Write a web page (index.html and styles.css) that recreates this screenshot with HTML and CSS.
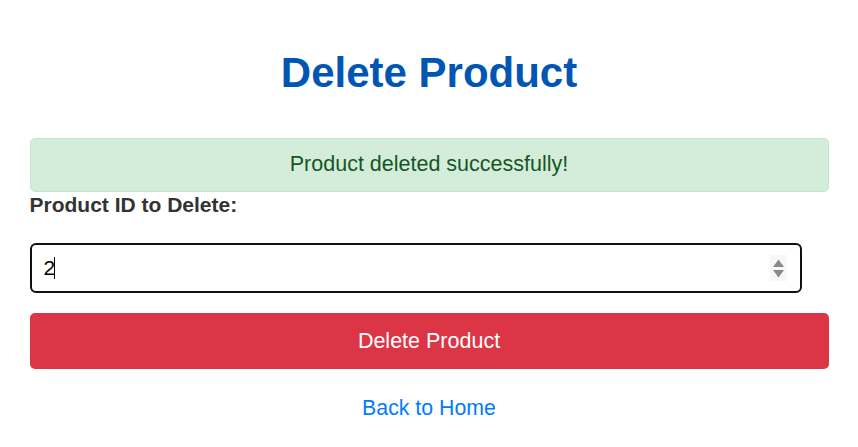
FILE: index.html
```html
<!DOCTYPE html>
<html>
<head>
<meta charset="utf-8">
<link rel="stylesheet" href="styles.css">
</head>
<body>
<div class="container">
  <h1 class="title">Delete Product</h1>
  <div class="alert">Product deleted successfully!</div>
  <form class="form">
    <label class="label" for="pid">Product ID to Delete:</label>
    <div class="field">
      <input class="input" id="pid" type="number" value="2">
      <span class="caret"></span>
      <span class="spin">
        <svg width="17" height="26" viewBox="0 0 17 26"><path d="M8.5 4.5 L14 12 L3 12 Z" fill="#8a8a8a"/><path d="M3 15 L14 15 L8.5 22.5 Z" fill="#8a8a8a"/></svg>
      </span>
    </div>
    <button class="btn" type="button">Delete Product</button>
  </form>
  <a class="back" href="#">Back to Home</a>
</div>
</body>
</html>
```

FILE: styles.css
```css
html, body {
  margin: 0;
  padding: 0;
  background: #ffffff;
}
body {
  font-family: "Liberation Sans", Arial, sans-serif;
  color: #333333;
}
.container {
  width: 799px;
  margin: 0 auto;
  padding-top: 48px;
  display: flex;
  flex-direction: column;
}
.title {
  margin: 0 0 40px;
  font-size: 42px;
  line-height: 50px;
  font-weight: bold;
  text-align: center;
  color: #0056b3;
}
.alert {
  background: #d4edda;
  border: 1px solid #c3e6cb;
  color: #155724;
  border-radius: 5px;
  font-size: 21.5px;
  line-height: 25px;
  padding: 13px 10px 14px;
  text-align: center;
}
.form {
  display: flex;
  flex-direction: column;
  margin: 0;
}
.label {
  font-size: 21px;
  font-weight: bold;
  line-height: 25px;
  margin-top: 0;
  color: #333333;
}
.field {
  position: relative;
  margin-top: 26px;
  width: 772px;
}
.input {
  box-sizing: border-box;
  width: 772px;
  height: 50px;
  border: 2px solid #111111;
  border-radius: 6px;
  padding: 0 12px;
  font-family: "Liberation Sans", Arial, sans-serif;
  font-size: 21px;
  color: #000;
  outline: none;
  -moz-appearance: textfield;
  appearance: textfield;
  display: block;
}
.input::-webkit-inner-spin-button,
.input::-webkit-outer-spin-button {
  -webkit-appearance: none;
  margin: 0;
}
.caret {
  position: absolute;
  left: 24px;
  top: 14px;
  width: 1px;
  height: 22px;
  background: #000;
}
.spin {
  position: absolute;
  right: 15px;
  top: 12px;
  width: 17px;
  height: 26px;
  display: flex;
  background: #f7f7f7;
}
.btn {
  margin-top: 20px;
  height: 56px;
  border: none;
  border-radius: 5px;
  background: #dc3545;
  color: #ffffff;
  font-family: "Liberation Sans", Arial, sans-serif;
  font-size: 21.5px;
  cursor: pointer;
}
.back {
  align-self: center;
  margin-top: 27px;
  font-size: 21.3px;
  line-height: 25px;
  color: #007bff;
  text-decoration: none;
}
```
